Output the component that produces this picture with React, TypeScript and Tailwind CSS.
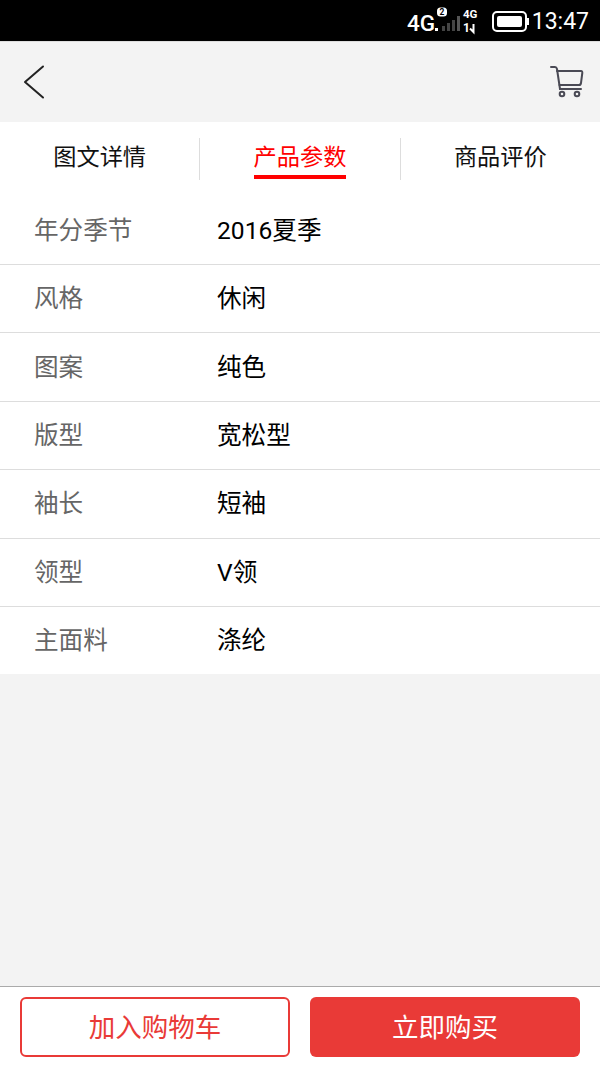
const rows = [
  ["年分季节", "2016夏季"],
  ["风格", "休闲"],
  ["图案", "纯色"],
  ["版型", "宽松型"],
  ["袖长", "短袖"],
  ["领型", "V领"],
  ["主面料", "涤纶"],
];

function StatusBar() {
  return (
    <div className="h-[41px] bg-black text-white flex items-center justify-end pr-[11px] shrink-0">
      <svg width="85" height="41" viewBox="0 0 85 41">
        <text x="0" y="31" fill="#fff" fontSize="22.500" fontWeight="500">4G</text>
        <rect x="28" y="28" width="3" height="3" fill="#fff" />
        <rect x="35" y="26" width="3" height="5" fill="#444" />
        <rect x="40" y="23" width="3" height="8" fill="#444" />
        <rect x="45" y="20" width="3" height="11" fill="#444" />
        <rect x="50" y="16" width="3" height="15" fill="#555" />
        <rect x="30" y="7.500" width="10" height="9" rx="3.500" fill="#fff" />
        <text x="35" y="15.200" fill="#000" fontSize="8.500" fontWeight="700" textAnchor="middle">2</text>
        <text x="56" y="18" fill="#fff" fontSize="11.500" fontWeight="700">4G</text>
        <text x="56" y="32" fill="#fff" fontSize="12" fontWeight="700">1</text>
        <path d="M66.500 24v8l-3.500-3.500" stroke="#fff" strokeWidth="2" fill="none" />
      </svg>
      <div className="mt-[2px] w-[35px] h-[21px] border-2 border-white rounded-[5px] flex items-center p-[3px]">
        <div className="w-[25px] h-full bg-white rounded-[2px]" />
      </div>
      <div className="mt-[2px] w-[2px] h-[7px] bg-white mr-[3px]" />
      <span className="text-[23px] leading-none mt-[1px]">13:47</span>
    </div>
  );
}

function Tab({ label, active }: { label: string; active?: boolean }) {
  return (
    <div className="flex-1 h-[42px] flex justify-center">
      <div className={`h-[41px] text-[23.200px] leading-[39px] ${active ? "text-[#ff0000] border-b-[4px] border-[#ff0000]" : "text-[#111]"}`}>
        {label}
      </div>
    </div>
  );
}

export default function App() {
  return (
    <div
      className="h-[1067px] w-[600px] bg-[#f3f3f3] flex flex-col overflow-hidden"
      style={{ fontFamily: '"Roboto", "Noto Sans CJK SC", sans-serif' }}
    >
      <StatusBar />

      <div className="h-[81px] shrink-0 flex items-center justify-between pl-[23px] pr-[16px] border-t border-[#ddd]">
        <svg width="22" height="34" viewBox="0 0 22 34" fill="none" stroke="#222" strokeWidth="2" strokeLinecap="round" strokeLinejoin="round">
          <path d="M20 1.500 2 17l18 15.500" />
        </svg>
        <svg width="34" height="34" viewBox="0 0 34 34" fill="none" stroke="#4a4a55" strokeWidth="2" strokeLinecap="round" strokeLinejoin="round">
          <path d="M1 2H5q1.500 0 2 2L10 24" />
          <path d="M7 6H31q1.500 0 1.300 2L31 18q-.3 2-2 2L9.500 20" />
          <path d="M10 24H31" />
          <circle cx="12" cy="29" r="2.300" />
          <circle cx="27" cy="29" r="2.300" />
        </svg>
      </div>

      <div className="bg-white h-[74.600px] pt-[16px] flex shrink-0">
        <Tab label="图文详情" />
        <div className="w-[1px] h-[42px] bg-[#ddd]" />
        <Tab label="产品参数" active />
        <div className="w-[1px] h-[42px] bg-[#ddd]" />
        <Tab label="商品评价" />
      </div>

      <div className="bg-white">
        {rows.map(([name, value], i) => (
          <div
            key={name}
            className={`flex items-center pl-[34px] pt-[2px] text-[24.600px] ${i < rows.length - 1 ? "h-[68.400px] border-b border-[#ddd]" : "h-[67.400px]"}`}
          >
            <span className="w-[183px] text-[#666]">{name}</span>
            <span className="text-black">{value}</span>
          </div>
        ))}
      </div>

      <div className="flex-1" />

      <div className="h-[81px] shrink-0 bg-white border-t border-[#aaa] flex gap-[20px] px-[20px] pt-[10px]">
        <button className="w-[270px] h-[60px] pt-[2px] rounded-[6px] border-2 border-[#e93a37] text-[#e93a37] text-[26.500px]">加入购物车</button>
        <button className="w-[270px] h-[60px] pt-[2px] rounded-[6px] bg-[#e93a37] text-white text-[26.500px]">立即购买</button>
      </div>
    </div>
  );
}
